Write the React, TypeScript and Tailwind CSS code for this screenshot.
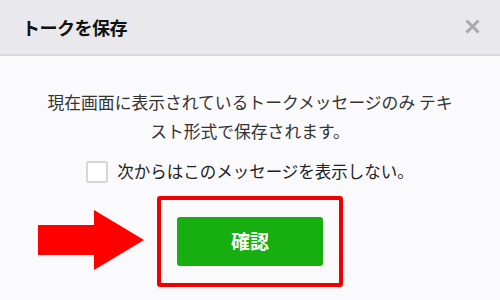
export default function App() {
  return (
    <div className="w-[500px] h-[300px] overflow-hidden bg-[#fafafc] font-['Noto_Sans_CJK_JP',sans-serif]">
      <div className="h-[56px] flex items-center justify-between pl-[22px] pr-[20px] bg-[#e9e9ed] border-b-2 border-[#d9d9dd]">
        <h1 className="text-[18px] font-bold text-[#111] leading-none tracking-[-0.5px]">トークを保存</h1>
        <svg width="15" height="15" viewBox="0 0 15 15" className="mb-[1px]">
          <path d="M1.5 1.5 L13.5 13.5 M13.5 1.5 L1.5 13.5" stroke="#a9a9ab" strokeWidth="3" />
        </svg>
      </div>

      <div className="flex flex-col items-center pt-[32px]">
        <p className="text-[16.8px] leading-[29px] text-[#333] text-center">
          現在画面に表示されているトークメッセージのみ テキ
          <br />
          スト形式で保存されます。
        </p>

        <label className="mt-[14px] flex items-center gap-[9px] h-[23px] text-[16.5px] text-[#222]">
          <span className="w-[22px] h-[22px] rounded-[2px] border-2 border-[#d6d6d8] bg-white" />
          次からはこのメッセージを表示しない。
        </label>

        <div className="relative mt-[13px] w-[186px] h-[91px] border-4 border-[#f00000] rounded-[3px] flex items-center justify-center">
          <svg
            width="107"
            height="61"
            viewBox="0 0 107 61"
            className="absolute right-[194px] top-[10px]"
          >
            <polygon points="0,15 56,15 56,0 106,30 56,60 56,45 0,45" fill="#ff0000" />
          </svg>
          <button className="w-[146px] h-[49px] rounded-[3px] bg-[#17ae10] text-white text-[19px] font-bold">
            確認
          </button>
        </div>
      </div>
    </div>
  )
}
